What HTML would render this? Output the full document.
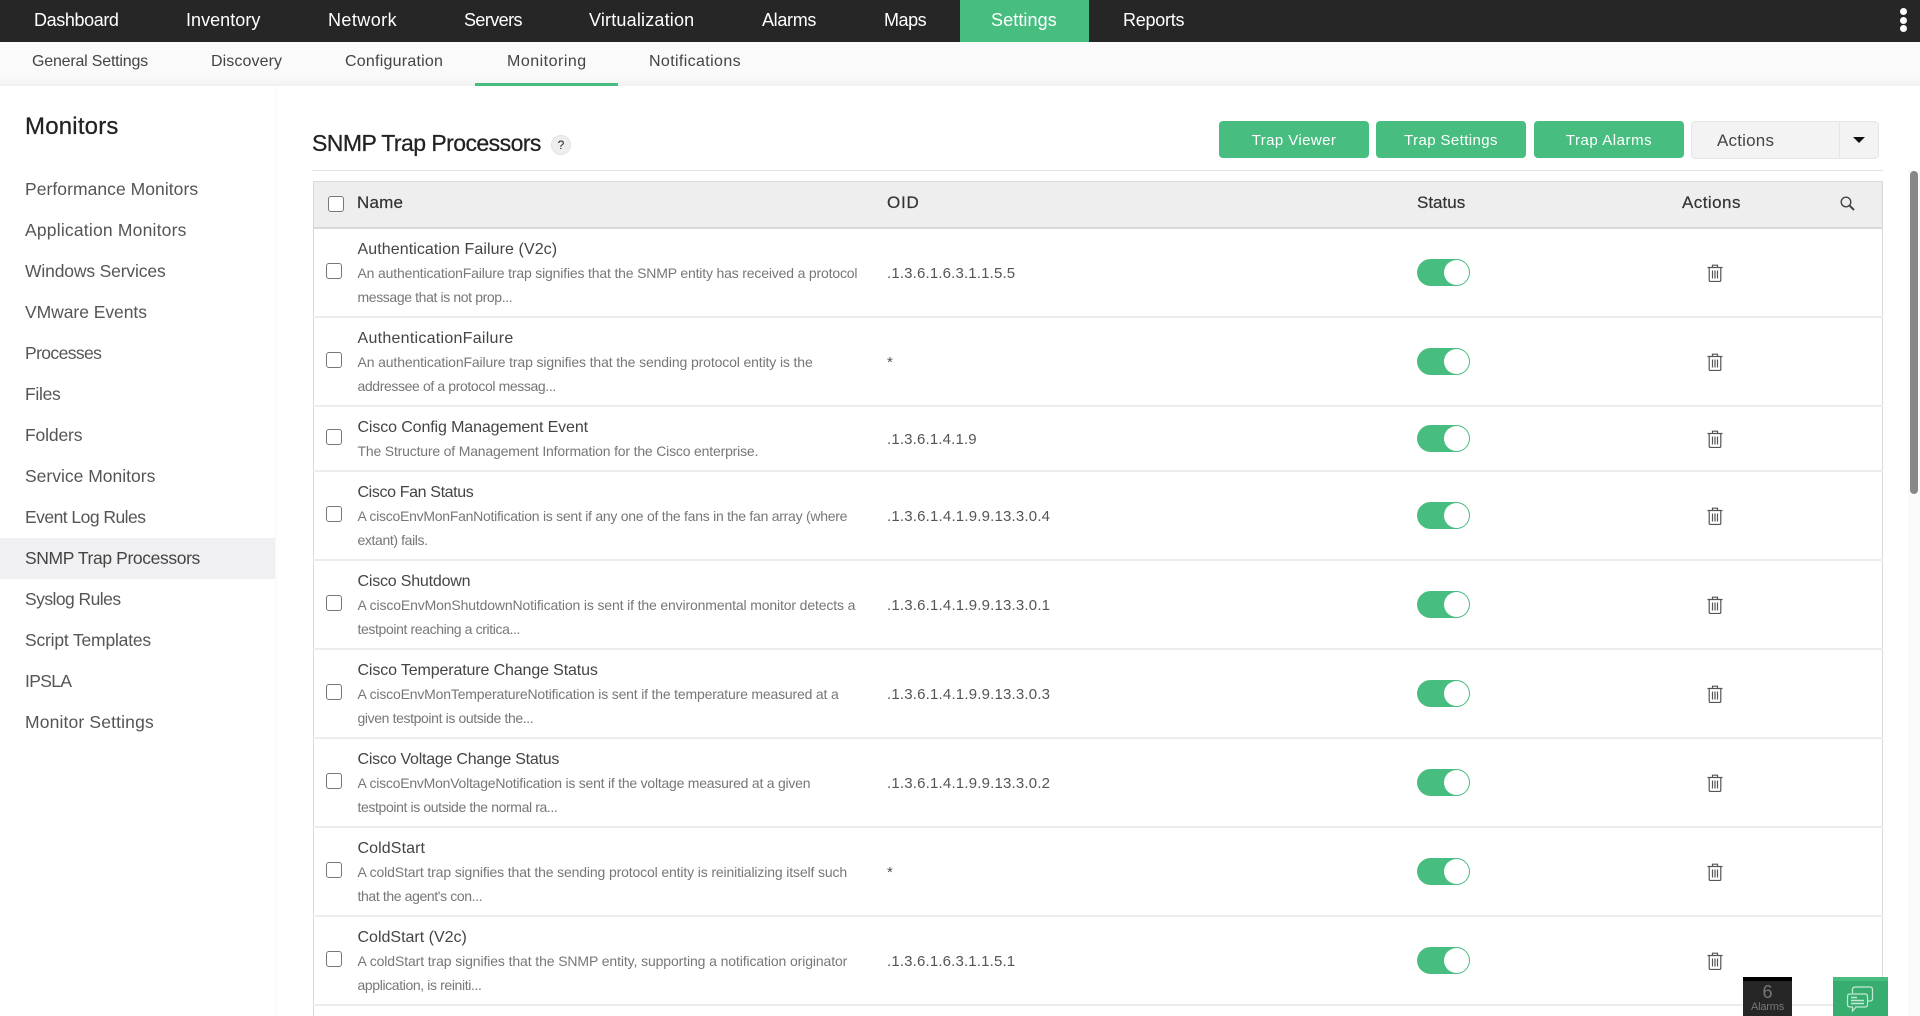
<!DOCTYPE html>
<html><head><meta charset="utf-8"><title>SNMP Trap Processors</title>
<style>
*{box-sizing:border-box}
html,body{margin:0;padding:0;width:1920px;height:1016px;overflow:hidden;background:#fff;font-family:"Liberation Sans",sans-serif}
.a{position:absolute;white-space:nowrap}
.nav{top:0;height:42px;line-height:40px;font-size:18px;color:#fff}
.sub{top:42px;height:40px;line-height:39px;font-size:16px;color:#444}
.side{left:25px;height:41px;line-height:41px;font-size:17.5px;color:#555}
.btn{top:121px;height:37px;line-height:40px;background:#47bd7f;color:#fff;border-radius:4px;text-align:center;font-size:15px}
.th{top:192px;line-height:22px;height:22px;font-size:17px;color:#333;-webkit-text-stroke:.2px #333}
.r{position:absolute;left:313px;width:1570px;border-bottom:2px solid #ececec}
.t{position:absolute;left:44.5px;top:11px;line-height:20px;font-size:16px;color:#444;white-space:nowrap}
.d{position:absolute;left:44.5px;top:32px;line-height:24px;font-size:14px;color:#777;white-space:nowrap}
.d span{letter-spacing:-.38px}
.o{position:absolute;left:574px;top:50%;margin-top:-10px;line-height:22px;font-size:15px;color:#555;white-space:nowrap;letter-spacing:.16px}
.c{position:absolute;left:13px;top:50%;margin-top:-10px;width:16px;height:16px;border:1px solid #777;border-radius:3px;background:#fff}
.s{position:absolute;left:1104px;top:50%;margin-top:-13.5px;width:53px;height:27px;border-radius:14px;background:#47bd7f}
.s i{position:absolute;right:1px;top:1px;width:25px;height:25px;border-radius:50%;background:#fff}
.x{position:absolute;left:1394px;top:50%;margin-top:-9px}
</style></head>
<body>
<svg width="0" height="0" style="position:absolute"><symbol id="tr" viewBox="0 0 16 18"><path fill="none" stroke="#555" stroke-width="1.2" d="M.5 3.5h15M5.5 3.5V1.2h5v2.3M2.2 3.5v12.7c0 .8.5 1.3 1.3 1.3h9c.8 0 1.3-.5 1.3-1.3V3.5M5.5 6.5v8M8 6.5v8M10.5 6.5v8"/></symbol></svg>
<div class="a" style="left:0;top:0;width:1920px;height:42px;background:#262626"></div>
<div class="a" style="left:960px;top:0;width:129px;height:42px;background:#47bd7f"></div>
<span class="a nav" style="left:34px;letter-spacing:-.39px">Dashboard</span>
<span class="a nav" style="left:186px;letter-spacing:.04px">Inventory</span>
<span class="a nav" style="left:328px;letter-spacing:.43px">Network</span>
<span class="a nav" style="left:464px;letter-spacing:-.59px">Servers</span>
<span class="a nav" style="left:589px;letter-spacing:.19px">Virtualization</span>
<span class="a nav" style="left:762px;letter-spacing:-.32px">Alarms</span>
<span class="a nav" style="left:884px;letter-spacing:-.45px">Maps</span>
<span class="a nav" style="left:991px;letter-spacing:.1px">Settings</span>
<span class="a nav" style="left:1123px;letter-spacing:-.25px">Reports</span>
<div class="a" style="left:1899.5px;top:8px;width:7px;height:7px;border-radius:50%;background:#fff"></div>
<div class="a" style="left:1899.5px;top:16.5px;width:7px;height:7px;border-radius:50%;background:#fff"></div>
<div class="a" style="left:1899.5px;top:25px;width:7px;height:7px;border-radius:50%;background:#fff"></div>

<div class="a" style="left:0;top:42px;width:1920px;height:44px;background:linear-gradient(#fafafa 0,#fafafa 34px,#f2f2f2 44px)"></div>
<span class="a sub" style="left:32px;letter-spacing:-.2px">General Settings</span>
<span class="a sub" style="left:211px;letter-spacing:.1px">Discovery</span>
<span class="a sub" style="left:345px;letter-spacing:.23px">Configuration</span>
<span class="a sub" style="left:507px;letter-spacing:.5px">Monitoring</span>
<span class="a sub" style="left:649px;letter-spacing:.37px">Notifications</span>
<div class="a" style="left:475px;top:83px;width:143px;height:3px;background:#47bd7f"></div>

<div class="a" style="left:0;top:86px;width:275px;height:930px;background:#fff;box-shadow:1px 0 3px rgba(0,0,0,.04)"></div>
<span class="a" style="left:25px;top:111px;line-height:32px;font-size:24px;color:#222;letter-spacing:.2px;-webkit-text-stroke:.25px #222">Monitors</span>
<div class="a" style="left:0;top:538px;width:275px;height:41px;background:#f0f0f2"></div>
<span class="a side" style="top:169px;letter-spacing:.05px">Performance Monitors</span>
<span class="a side" style="top:210px;letter-spacing:.2px">Application Monitors</span>
<span class="a side" style="top:251px;letter-spacing:-.15px">Windows Services</span>
<span class="a side" style="top:292px;letter-spacing:-.05px">VMware Events</span>
<span class="a side" style="top:333px;letter-spacing:-.6px">Processes</span>
<span class="a side" style="top:374px;letter-spacing:-.3px">Files</span>
<span class="a side" style="top:415px;letter-spacing:-.15px">Folders</span>
<span class="a side" style="top:456px;letter-spacing:0">Service Monitors</span>
<span class="a side" style="top:497px;letter-spacing:-.53px">Event Log Rules</span>
<span class="a side" style="top:538px;color:#444;letter-spacing:-.38px">SNMP Trap Processors</span>
<span class="a side" style="top:579px;letter-spacing:-.55px">Syslog Rules</span>
<span class="a side" style="top:620px;letter-spacing:-.19px">Script Templates</span>
<span class="a side" style="top:661px;letter-spacing:-.65px">IPSLA</span>
<span class="a side" style="top:702px;letter-spacing:.15px">Monitor Settings</span>

<span class="a" style="left:312px;top:127px;line-height:32px;font-size:23px;color:#222;letter-spacing:-.55px;-webkit-text-stroke:.25px #222">SNMP Trap Processors</span>
<div class="a" style="left:551px;top:135px;width:20px;height:20px;border-radius:50%;background:#eee;border:1px solid #e4e4e4;text-align:center;line-height:18px;font-size:12px;color:#222">?</div>

<div class="a btn" style="left:1219px;width:150px;letter-spacing:.4px">Trap Viewer</div>
<div class="a btn" style="left:1376px;width:150px;letter-spacing:.4px">Trap Settings</div>
<div class="a btn" style="left:1534px;width:150px;letter-spacing:.55px">Trap Alarms</div>
<div class="a" style="left:1691px;top:121px;width:188px;height:38px;background:#f3f3f3;border:1px solid #e6e6e6;border-radius:4px"></div>
<div class="a" style="left:1839px;top:122px;width:1px;height:36px;background:#e4e4e4"></div>
<span class="a" style="left:1717px;top:120px;line-height:41px;font-size:17px;color:#444;letter-spacing:.2px">Actions</span>
<div class="a" style="left:1853px;top:137px;width:0;height:0;border-left:6px solid transparent;border-right:6px solid transparent;border-top:6px solid #111"></div>

<div class="a" style="left:312px;top:170px;width:1571px;height:1px;background:#e2e2e2"></div>

<div class="a" style="left:313px;top:181px;width:1570px;height:48px;background:#eee;border:1px solid #d9d9d9;border-bottom:2px solid #d9d9d9"></div>
<div class="a" style="left:313px;top:229px;width:1px;height:787px;background:#d9d9d9"></div>
<div class="a" style="left:1882px;top:229px;width:1px;height:787px;background:#d9d9d9"></div>
<div class="a" style="left:328px;top:196px;width:16px;height:16px;border:1px solid #777;border-radius:3px;background:#fff"></div>
<span class="a th" style="left:357px;letter-spacing:.2px">Name</span>
<span class="a th" style="left:887px;letter-spacing:.8px">OID</span>
<span class="a th" style="left:1417px;letter-spacing:0">Status</span>
<span class="a th" style="left:1682px;letter-spacing:.45px">Actions</span>
<svg class="a" style="left:1840px;top:196px" width="15" height="15" viewBox="0 0 15 15" fill="none" stroke="#444" stroke-width="1.4"><circle cx="6" cy="6" r="4.8"/><path d="M9.6 9.6L14 14" stroke-width="2"/></svg>

<div class="r" style="top:229px;height:89px"><div class="c"></div><div class="t" style="letter-spacing:.08px">Authentication Failure (V2c)</div><div class="d" style="letter-spacing:-.17px">An authenticationFailure trap signifies that the SNMP entity has received a protocol<br><span>message that is not prop...</span></div><div class="o">.1.3.6.1.6.3.1.1.5.5</div><div class="s"><i></i></div><svg class="x" width="16" height="18"><use href="#tr"/></svg></div>
<div class="r" style="top:318px;height:89px"><div class="c"></div><div class="t" style="letter-spacing:.27px">AuthenticationFailure</div><div class="d" style="letter-spacing:-.13px">An authenticationFailure trap signifies that the sending protocol entity is the<br><span>addressee of a protocol messag...</span></div><div class="o">*</div><div class="s"><i></i></div><svg class="x" width="16" height="18"><use href="#tr"/></svg></div>
<div class="r" style="top:407px;height:65px"><div class="c"></div><div class="t" style="letter-spacing:-.12px">Cisco Config Management Event</div><div class="d" style="letter-spacing:-.18px">The Structure of Management Information for the Cisco enterprise.</div><div class="o">.1.3.6.1.4.1.9</div><div class="s"><i></i></div><svg class="x" width="16" height="18"><use href="#tr"/></svg></div>
<div class="r" style="top:472px;height:89px"><div class="c"></div><div class="t" style="letter-spacing:-.37px">Cisco Fan Status</div><div class="d" style="letter-spacing:-.26px">A ciscoEnvMonFanNotification is sent if any one of the fans in the fan array (where<br><span>extant) fails.</span></div><div class="o" style="letter-spacing:.19px">.1.3.6.1.4.1.9.9.13.3.0.4</div><div class="s"><i></i></div><svg class="x" width="16" height="18"><use href="#tr"/></svg></div>
<div class="r" style="top:561px;height:89px"><div class="c"></div><div class="t" style="letter-spacing:-.2px">Cisco Shutdown</div><div class="d" style="letter-spacing:-.14px">A ciscoEnvMonShutdownNotification is sent if the environmental monitor detects a<br><span>testpoint reaching a critica...</span></div><div class="o" style="letter-spacing:.19px">.1.3.6.1.4.1.9.9.13.3.0.1</div><div class="s"><i></i></div><svg class="x" width="16" height="18"><use href="#tr"/></svg></div>
<div class="r" style="top:650px;height:89px"><div class="c"></div><div class="t" style="letter-spacing:-.13px">Cisco Temperature Change Status</div><div class="d" style="letter-spacing:-.18px">A ciscoEnvMonTemperatureNotification is sent if the temperature measured at a<br><span>given testpoint is outside the...</span></div><div class="o" style="letter-spacing:.19px">.1.3.6.1.4.1.9.9.13.3.0.3</div><div class="s"><i></i></div><svg class="x" width="16" height="18"><use href="#tr"/></svg></div>
<div class="r" style="top:739px;height:89px"><div class="c"></div><div class="t" style="letter-spacing:-.24px">Cisco Voltage Change Status</div><div class="d" style="letter-spacing:-.23px">A ciscoEnvMonVoltageNotification is sent if the voltage measured at a given<br><span>testpoint is outside the normal ra...</span></div><div class="o" style="letter-spacing:.19px">.1.3.6.1.4.1.9.9.13.3.0.2</div><div class="s"><i></i></div><svg class="x" width="16" height="18"><use href="#tr"/></svg></div>
<div class="r" style="top:828px;height:89px"><div class="c"></div><div class="t" style="letter-spacing:.1px">ColdStart</div><div class="d" style="letter-spacing:-.14px">A coldStart trap signifies that the sending protocol entity is reinitializing itself such<br><span>that the agent's con...</span></div><div class="o">*</div><div class="s"><i></i></div><svg class="x" width="16" height="18"><use href="#tr"/></svg></div>
<div class="r" style="top:917px;height:89px"><div class="c"></div><div class="t">ColdStart (V2c)</div><div class="d" style="letter-spacing:-.11px">A coldStart trap signifies that the SNMP entity, supporting a notification originator<br><span>application, is reiniti...</span></div><div class="o">.1.3.6.1.6.3.1.1.5.1</div><div class="s"><i></i></div><svg class="x" width="16" height="18"><use href="#tr"/></svg></div>

<div class="a" style="left:1908px;top:170px;width:12px;height:846px;background:#fafafa"></div>
<div class="a" style="left:1910px;top:171px;width:8px;height:323px;background:#888;border-radius:4px"></div>

<div class="a" style="left:1743px;top:977px;width:49px;height:39px;background:#262626;border-top:4px solid #000"></div>
<span class="a" style="left:1743px;width:49px;text-align:center;top:982px;line-height:20px;font-size:18px;color:#777">6</span>
<span class="a" style="left:1743px;width:49px;text-align:center;top:1000px;line-height:14px;font-size:11px;color:#777;letter-spacing:-.2px">Alarms</span>

<div class="a" style="left:1833px;top:977px;width:55px;height:39px;background:#38ad70;border-top:4px solid #47bd7f"></div>
<svg class="a" style="left:1833px;top:977px" width="55" height="39" viewBox="0 0 55 39" fill="none" stroke="#c4ead4" stroke-width="1.2"><path d="M19.5 16v-3.5c0-1.5 1-2.5 2.5-2.5h15c1.5 0 2.5 1 2.5 2.5v9c0 1.5-1 2.5-2.5 2.5h-2"/><path d="M17 17h15c1.5 0 2.5 1 2.5 2.5v8c0 1.5-1 2.5-2.5 2.5H23l-3.5 4v-4H17c-1.5 0-2.5-1-2.5-2.5v-8c0-1.5 1-2.5 2.5-2.5z" fill="#38ad70"/><path d="M18 20.5h6M18 23.5h13M18 26.5h13" stroke-width="1.4"/></svg>
</body></html>
